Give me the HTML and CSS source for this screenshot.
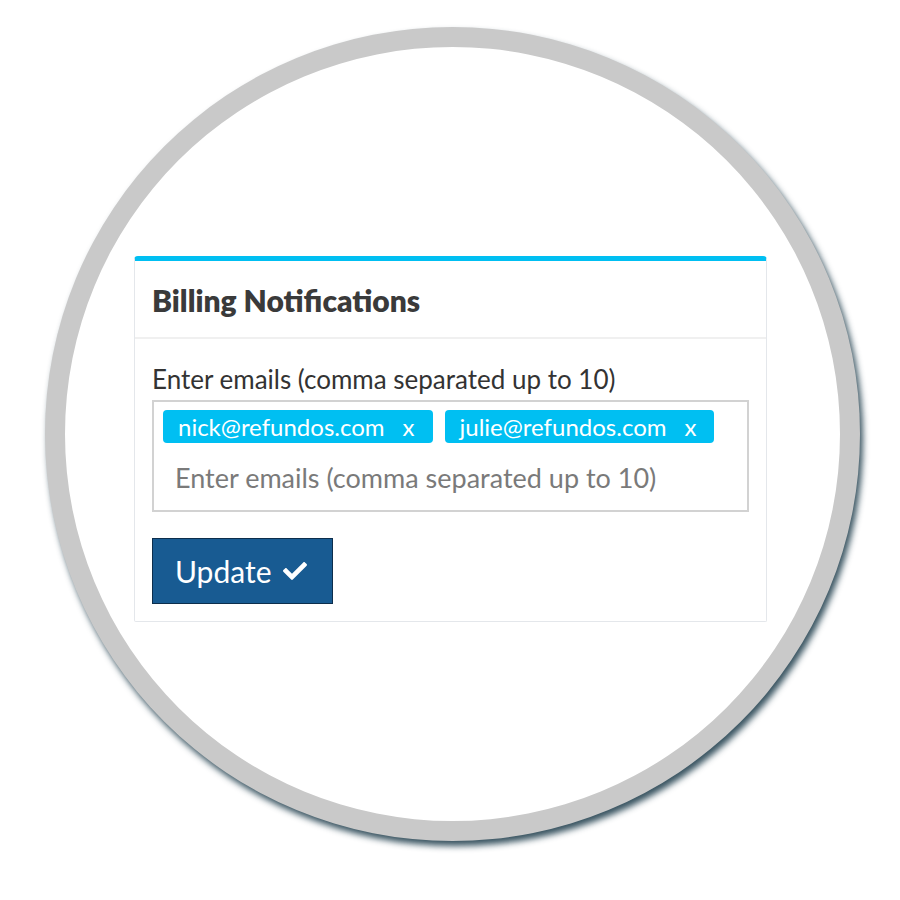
FILE: index.html
```html
<!DOCTYPE html>
<html>
<head>
<meta charset="utf-8">
<link rel="stylesheet" href="styles.css">
</head>
<body>
<div class="stage">
  <div class="ring">
    <div class="card">
      <div class="card-header">
        <h2 class="title">Billing Notifications</h2>
      </div>
      <div class="card-body">
        <label class="label">Enter emails (comma separated up to 10)</label>
        <div class="tag-input">
          <div class="tags">
            <span class="tag"><span class="tag-text">nick@refundos.com</span><span class="tag-x">x</span></span>
            <span class="tag"><span class="tag-text">julie@refundos.com</span><span class="tag-x">x</span></span>
          </div>
          <div class="placeholder">Enter emails (comma separated up to 10)</div>
        </div>
        <button class="btn">Update
          <svg class="check" viewBox="0 0 512 512" width="28" height="28"><path fill="#fff" d="M173.898 439.404l-166.4-166.4c-9.997-9.997-9.997-26.206 0-36.204l36.203-36.204c9.997-9.998 26.207-9.998 36.204 0L192 312.69 432.095 72.596c9.997-9.997 26.207-9.997 36.204 0l36.203 36.204c9.997 9.997 9.997 26.206 0 36.204l-294.4 294.401c-9.998 9.997-26.207 9.997-36.204-.001z"/></svg>
        </button>
      </div>
    </div>
  </div>
</div>
</body>
</html>
```
FILE: styles.css
```css
html, body {
  margin: 0;
  padding: 0;
  background: #ffffff;
}
body {
  font-family: Lato, "Open Sans", sans-serif;
  width: 900px;
  height: 900px;
  overflow: hidden;
}
.stage {
  padding: 27px 0 0 45px;
}
.ring {
  box-sizing: border-box;
  width: 815px;
  height: 814px;
  border: 20px solid #c9c9c9;
  border-radius: 50%;
  box-shadow: 3px 5px 6px rgba(35, 65, 80, 0.9);
  padding: 209px 0 0 69px;
  background: #fff;
}
.card {
  box-sizing: border-box;
  width: 633px;
  border: 1px solid #e4e7eb;
  border-top: 5px solid #00bff2;
  border-radius: 4px 4px 2px 2px;
  background: #fff;
}
.card-header {
  height: 76px;
  border-bottom: 2px solid #f0f0f0;
  display: flex;
  align-items: center;
  padding: 0 17px;
}
.title {
  margin: 0;
  font-size: 30px;
  font-weight: 800;
  color: #3a3a3a;
  padding-top: 2px;
}
.card-body {
  padding: 25px 17px 17px;
}
.label {
  display: block;
  font-size: 26px;
  line-height: 30px;
  color: #333;
  margin-bottom: 6px;
}
.tag-input {
  box-sizing: border-box;
  height: 112px;
  border: 2px solid #d2d2d2;
  padding: 8px 10px 0 9px;
}
.tags {
  display: flex;
  gap: 12px;
}
.tag {
  display: inline-flex;
  align-items: center;
  height: 33px;
  background: #00bff2;
  color: #fff;
  border-radius: 4px;
  padding: 0 18px 0 15px;
  font-size: 24px;
}
.tag-x {
  margin-left: 18px;
  font-size: 24px;
}
.placeholder {
  margin-top: 20px;
  padding-left: 12px;
  font-size: 27px;
  line-height: 30px;
  color: #7a7a7a;
}
.btn {
  margin-top: 26px;
  box-sizing: border-box;
  width: 181px;
  height: 66px;
  background: #185b92;
  border: 1px solid #0d2e4c;
  color: #fff;
  font-family: Lato, sans-serif;
  font-size: 30px;
  display: flex;
  align-items: center;
  padding: 0 0 0 22px;
  gap: 10px;
  cursor: pointer;
}
.check {
  width: 28px;
  height: 24px;
}
```
